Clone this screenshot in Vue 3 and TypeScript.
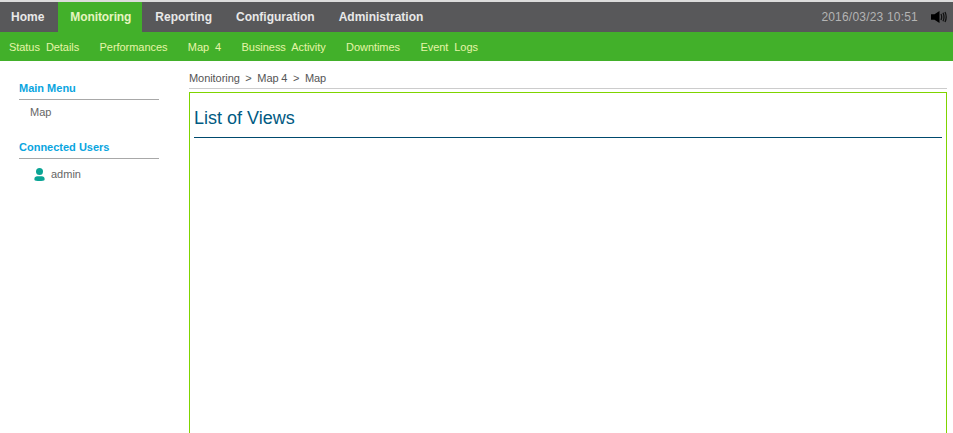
<script setup lang="ts">
const mainTabs = ['Home', 'Monitoring', 'Reporting', 'Configuration', 'Administration']
const subTabs = ['Status\u00a0 Details', 'Performances', 'Map\u00a0 4', 'Business\u00a0 Activity', 'Downtimes', 'Event\u00a0 Logs']
</script>

<template>
  <div class="page">
    <header class="top">
      <nav class="main-nav">
        <a v-for="t in mainTabs" :key="t" class="main-tab" :class="{ active: t === 'Monitoring' }">{{ t }}</a>
      </nav>
      <div class="clock">
        <span>2016/03/23 10:51</span>
        <svg class="speaker" width="16" height="12" viewBox="0 0 16 12">
          <path d="M0 3.200h3.500L8.500 0v12L3.500 8.800H0z" fill="#000" />
          <path d="M10 3q1.400 3 0 6M12 1.800q2 4.200 0 8.400M14 1q2.400 5 0 10" fill="none" stroke="#111" stroke-width="1.300" />
        </svg>
      </div>
    </header>
    <nav class="sub-nav">
      <a v-for="t in subTabs" :key="t" class="sub-tab">{{ t }}</a>
    </nav>
    <div class="body">
      <aside class="side">
        <h3 class="side-title">Main Menu</h3>
        <div class="side-item">Map</div>
        <h3 class="side-title second">Connected Users</h3>
        <div class="user">
          <svg width="11" height="13" viewBox="0 0 11 13">
            <circle cx="5.500" cy="3.500" r="3.500" fill="#0ba495" />
            <path d="M.5 12c-.5-2.500.8-3.800 2.700-3.800h4.600c1.900 0 3.200 1.300 2.700 3.800-.3 1.300-9.700 1.300-10 0z" fill="#0ba495" />
          </svg>
          <span>admin</span>
        </div>
      </aside>
      <main class="content">
        <div class="crumbs">Monitoring&nbsp; &gt;&nbsp; Map 4&nbsp; &gt;&nbsp; Map</div>
        <section class="panel">
          <h1 class="panel-title">List of Views</h1>
        </section>
      </main>
    </div>
  </div>
</template>

<style scoped>
.page {
  height: 433px;
  box-sizing: border-box;
  overflow: hidden;
  display: flex;
  flex-direction: column;
  background: #fff;
  border-top: 2px solid #dcdcdc;
  font-family: "Liberation Sans", Arial, sans-serif;
}
.top {
  height: 30px;
  flex: none;
  background: #58585a;
  display: flex;
  justify-content: space-between;
  align-items: stretch;
}
.main-nav { display: flex; }
.main-tab {
  padding: 0 12px;
  line-height: 30px;
  font-size: 12px;
  font-weight: 700;
  color: #e8e8e8;
}
.main-tab:first-child { padding: 0 14px 0 11px; }
.main-tab.active {
  background: #42b02a;
  color: #e6f5c0;
  padding: 0 11px 0 12px;
  letter-spacing: -0.1px;
  margin-right: 1px;
}
.clock {
  display: flex;
  align-items: center;
  gap: 13px;
  padding-right: 6px;
  font-size: 12px;
  letter-spacing: 0.2px;
  color: #b4b4b4;
}
.speaker { display: block; }
.sub-nav {
  height: 29px;
  flex: none;
  background: #42b02a;
  display: flex;
  align-items: center;
  gap: 20.400px;
  padding-left: 9px;
}
.sub-tab {
  font-size: 11px;
  letter-spacing: -0.05px;
  color: #e6f5a8;
}
.body { display: flex; flex: 1; min-height: 0; }
.side {
  width: 140px;
  margin-left: 19px;
  padding-top: 20px;
  flex: none;
}
.side-title {
  margin: 0;
  padding-bottom: 4px;
  font-size: 11px;
  line-height: 14px;
  font-weight: 700;
  color: #0aa5e0;
  border-bottom: 1px solid #a8a8a8;
}
.side-title.second { margin-top: 21px; }
.side-item {
  margin-top: 5px;
  padding-left: 11px;
  font-size: 11px;
  line-height: 14px;
  color: #666;
}
.user {
  margin-top: 8px;
  padding-left: 15px;
  display: flex;
  align-items: center;
  gap: 6px;
  font-size: 11px;
  line-height: 14px;
  color: #666;
}
.user svg { display: block; }
.content {
  flex: 1;
  min-width: 0;
  margin: 0 6px 0 30px;
  padding-top: 10px;
  display: flex;
  flex-direction: column;
}
.crumbs {
  font-size: 11px;
  line-height: 14px;
  letter-spacing: -0.06px;
  word-spacing: -0.2px;
  color: #555;
  padding-bottom: 3px;
  border-bottom: 1px solid #ccc;
}
.panel {
  flex: 1;
  margin-top: 3px;
  border: 1px solid #7fd400;
  border-bottom: 0;
  padding: 0 4px;
}
.panel-title {
  margin: 0;
  padding: 13px 0 7px;
  font-size: 18px;
  line-height: 24px;
  font-weight: 400;
  color: #005a82;
  border-bottom: 1px solid #004a6e;
}
</style>
